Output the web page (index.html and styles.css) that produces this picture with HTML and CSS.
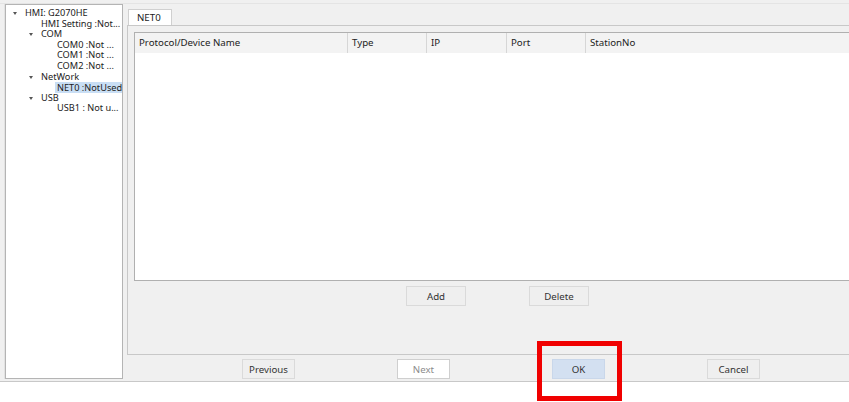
FILE: index.html
```html
<!DOCTYPE html>
<html lang="en">

<head>
  <meta charset="UTF-8" />
  <title>Communication Setting</title>
  <link rel="stylesheet" href="styles.css">
</head>

<body>
  <div class="dialog">
    <div class="top-edge"></div>

    <div class="main">
      <!-- Device tree -->
      <div class="tree">
        <div class="node lv0"><span class="caret"></span>HMI: G2070HE</div>
        <div class="node lv1"><span class="caret empty"></span>HMI Setting :Not...</div>
        <div class="node lv1"><span class="caret"></span>COM</div>
        <div class="node lv2"><span class="caret empty"></span>COM0 :Not ...</div>
        <div class="node lv2"><span class="caret empty"></span>COM1 :Not ...</div>
        <div class="node lv2"><span class="caret empty"></span>COM2 :Not ...</div>
        <div class="node lv1"><span class="caret"></span>NetWork</div>
        <div class="node lv2"><span class="caret empty"></span><span class="selected">NET0 :NotUsed</span></div>
        <div class="node lv1"><span class="caret"></span>USB</div>
        <div class="node lv2"><span class="caret empty"></span>USB1 : Not u...</div>
      </div>

      <div class="right">
        <div class="tabs">
          <div class="tab active">NET0</div>
        </div>

        <div class="tab-page">
          <div class="list">
            <div class="list-header">
              <div class="col col-name">Protocol/Device Name</div>
              <div class="col col-type">Type</div>
              <div class="col col-ip">IP</div>
              <div class="col col-port">Port</div>
              <div class="col col-station">StationNo</div>
            </div>
            <div class="list-body"></div>
          </div>

          <div class="list-actions">
            <button class="btn btn-wide">Add</button>
            <button class="btn btn-wide">Delete</button>
          </div>
        </div>

        <div class="footer-buttons">
          <button class="btn">Previous</button>
          <button class="btn disabled">Next</button>
          <button class="btn default">OK</button>
          <button class="btn">Cancel</button>
        </div>
      </div>
    </div>
  </div>

  <div class="highlight-box"></div>
</body>

</html>
```

FILE: styles.css
```css
/* Base */
* {
  box-sizing: border-box;
  margin: 0;
  padding: 0;
}

body {
  width: 849px;
  height: 402px;
  overflow: hidden;
  background-color: #ffffff;
  font-family: 'Noto Sans', 'Open Sans', sans-serif;
  font-size: 9.7px;
  color: #222;
  position: relative;
}

.dialog {
  height: 382px;
  background-color: #f0f0f0;
  border-bottom: 1px solid #c8c8c8;
}

.top-edge {
  height: 4px;
  border-bottom: 1px solid #e4e4e4;
}

.main {
  display: flex;
  padding-left: 5px;
}

/* Tree */
.tree {
  width: 118px;
  height: 375px;
  background-color: #fff;
  border: 1px solid #b4b4b4;
  box-shadow: -1px 0 0 #e2e2e2;
  padding-top: 3px;
  font-size: 9.2px;
  overflow: hidden;
}

.node {
  display: flex;
  align-items: center;
  height: 10.6px;
  line-height: 10.6px;
  white-space: nowrap;
}

.lv0 { padding-left: 6px; }
.lv1 { padding-left: 22px; }
.lv2 { padding-left: 38px; }

.caret {
  width: 13px;
  flex: none;
  position: relative;
  height: 10px;
}

.caret::before {
  content: "";
  position: absolute;
  left: 1px;
  top: 4px;
  border-left: 2.5px solid transparent;
  border-right: 2.5px solid transparent;
  border-top: 3px solid #555;
}

.caret.empty::before {
  display: none;
}

.selected {
  background-color: #c9def4;
  padding: 0 2px;
  margin-left: -2px;
  height: 11px;
  line-height: 11px;
}

/* Right side */
.right {
  flex: 1;
  min-width: 0;
  padding-left: 4px;
  display: flex;
  flex-direction: column;
}

.tabs {
  display: flex;
  height: 21px;
  padding-top: 5px;
}

.tab {
  width: 44px;
  height: 17px;
  margin-left: 1px;
  padding-left: 8px;
  line-height: 16px;
  border: 1px solid #d0d0d0;
  border-bottom: none;
  background-color: #fff;
}

.tab-page {
  height: 330px;
  border: 1px solid #c8c8c8;
  border-right: none;
  padding: 6px 0 0 6px;
}

.list {
  height: 249px;
  border: 1px solid #b0b0b0;
  border-right: none;
  background-color: #fff;
  display: flex;
  flex-direction: column;
}

.list-header {
  display: flex;
  height: 20px;
  background-color: #f3f3f3;
}

.col {
  line-height: 20px;
  padding-left: 4px;
  border-right: 1px solid #d6d6d6;
  white-space: nowrap;
}

.col-name { width: 213px; }
.col-type { width: 79px; }
.col-ip { width: 80px; }
.col-port { width: 79px; }
.col-station { flex: 1; border-right: none; }

.list-body {
  flex: 1;
}

.list-actions {
  display: flex;
  gap: 63px;
  padding: 5px 0 0 272px;
}

/* Buttons */
.btn {
  font-family: inherit;
  font-size: 9.7px;
  color: #333;
  width: 53px;
  height: 20px;
  background-color: #efefef;
  border: 1px solid #dadada;
}

.btn-wide {
  width: 60px;
}

.btn.disabled {
  background-color: #fff;
  border-color: #cfcfcf;
  color: #8c8c8c;
}

.btn.default {
  background-color: #d3e0f1;
  border-color: #c9d7ea;
}

.footer-buttons {
  display: flex;
  gap: 102px;
  padding: 4px 0 0 115px;
}

/* Red annotation frame drawn over the dialog */
.highlight-box {
  position: absolute;
  left: 537px;
  top: 341px;
  width: 85px;
  height: 60px;
  border: 5px solid #f00000;
}
```
